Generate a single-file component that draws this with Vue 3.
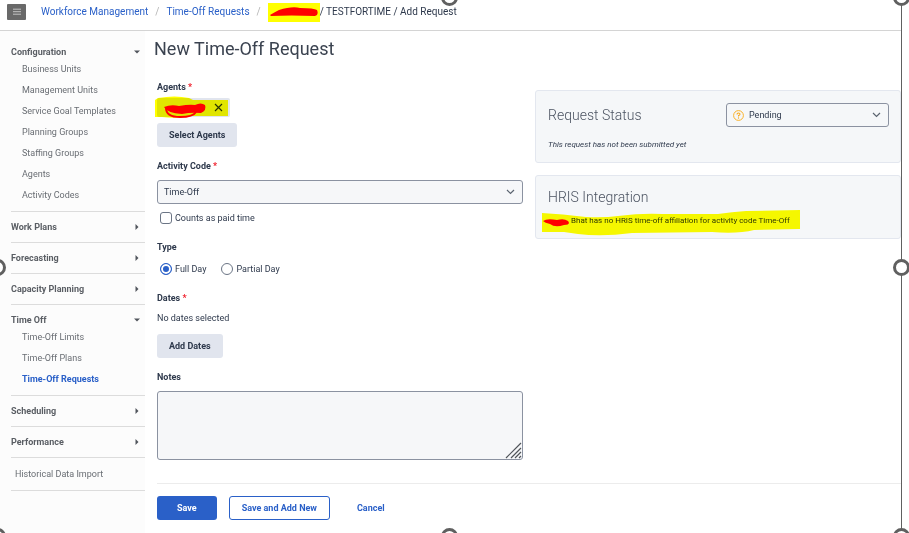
<script setup>
import { ref } from 'vue'

const menu = ref([
  {
    title: 'Configuration',
    open: true,
    items: [
      'Business Units',
      'Management Units',
      'Service Goal Templates',
      'Planning Groups',
      'Staffing Groups',
      'Agents',
      'Activity Codes',
    ],
  },
  { title: 'Work Plans', open: false, items: [] },
  { title: 'Forecasting', open: false, items: [] },
  { title: 'Capacity Planning', open: false, items: [] },
  {
    title: 'Time Off',
    open: true,
    items: ['Time-Off Limits', 'Time-Off Plans', 'Time-Off Requests'],
  },
  { title: 'Scheduling', open: false, items: [] },
  { title: 'Performance', open: false, items: [] },
])

const current = 'Time-Off Requests'
const handles = ['top', 'topRight', 'left', 'right', 'bottomLeft', 'bottom', 'bottomRight']

const activityCode = ref('Time-Off')
const paidTime = ref(false)
const dayType = ref('full')
const notes = ref('')
const status = ref('Pending')
</script>

<template>
  <div class="page">
    <header class="topBar">
      <button class="menuBtn" aria-label="Menu">
        <svg width="8" height="8" viewBox="0 0 8 8">
          <path d="M0 1.2h8M0 3.7h8M0 6.2h8" stroke="#c4c4c4" stroke-width="1" />
        </svg>
      </button>
      <nav class="crumbs">
        <a href="#">Workforce Management</a>
        <span class="slash">/</span>
        <a href="#">Time-Off Requests</a>
        <span class="slash">/</span>
        <span class="marked">
          <svg width="48" height="10" viewBox="0 0 48 10">
            <path d="M0 8Q5 5 9 3Q22-1 30 1Q44 1 47 3Q49 8 45 9Q20 8 1 9Z" fill="#f00" />
          </svg>
        </span>
        <span>/ TESTFORTIME / Add Request</span>
      </nav>
    </header>

    <div class="body">
      <aside class="sidebar">
        <section v-for="group in menu" :key="group.title" class="group" :class="{ open: group.open }">
          <button class="groupTitle" :aria-expanded="group.open" @click="group.open = !group.open">
            {{ group.title }}
            <svg width="6" height="6" viewBox="0 0 6 6">
              <path :d="group.open ? 'M0 1.5h6L3 4.5z' : 'M1.5 0v6L4.5 3z'" fill="#50555c" />
            </svg>
          </button>
          <ul v-if="group.open && group.items.length">
            <li v-for="item in group.items" :key="item">
              <a href="#" :class="{ current: item === current }">{{ item }}</a>
            </li>
          </ul>
        </section>
        <a href="#" class="importLink">Historical Data Import</a>
      </aside>

      <main class="main">
        <h1>New Time-Off Request</h1>
        <form class="form" @submit.prevent>
          <div class="columns">
            <div class="fields">
              <h2>Agents <span class="required">*</span></h2>
              <div class="chip">
                <button type="button" class="removeBtn" aria-label="Remove agent">
                  <svg width="9" height="9" viewBox="0 0 9 9">
                    <path d="M1 1l7 7M8 1L1 8" stroke="#2a3442" stroke-width="1.2" />
                  </svg>
                </button>
                <svg class="chipMark" width="74" height="22" viewBox="0 0 74 22">
                  <path d="M0 4L3 2Q20-1 34 2L38 4H73V20H36Q20 23 7 21H0Z" fill="#ff0" />
                </svg>
                <svg class="chipScribble" width="44" height="17" viewBox="0 0 44 17">
                  <path
                    d="M1 5Q8 2 16 4Q27 2 32 3Q38 0 42 3Q44 8 38 11Q28 10 19 12Q4 11 1 5Z"
                    fill="#f00"
                  />
                  <path d="M3 6Q3 15 17 15Q30 15 33 10" fill="none" stroke="#f00" stroke-width="2" />
                </svg>
              </div>
              <button type="button" class="btn gray">Select Agents</button>

              <label class="heading" for="activity">Activity Code <span class="required">*</span></label>
              <div class="selectBox">
                <select id="activity" v-model="activityCode">
                  <option>Time-Off</option>
                </select>
                <svg class="chevron" width="9" height="6" viewBox="0 0 9 6">
                  <path d="M1 1l3.5 3.5L8 1" fill="none" stroke="#5b6470" stroke-width="1.2" />
                </svg>
              </div>
              <label class="choice paid">
                <input v-model="paidTime" type="checkbox" />
                Counts as paid time
              </label>

              <h2 id="typeLabel">Type</h2>
              <div class="choices" role="radiogroup" aria-labelledby="typeLabel">
                <label class="choice">
                  <input v-model="dayType" type="radio" name="dayType" value="full" />
                  Full Day
                </label>
                <label class="choice">
                  <input v-model="dayType" type="radio" name="dayType" value="partial" />
                  Partial Day
                </label>
              </div>

              <h2>Dates <span class="required">*</span></h2>
              <p class="noDates">No dates selected</p>
              <button type="button" class="btn gray">Add Dates</button>

              <label class="heading" for="notes">Notes</label>
              <div class="notesBox">
                <textarea id="notes" v-model="notes"></textarea>
                <svg class="grip" width="17" height="17" viewBox="0 0 17 17">
                  <path
                    d="M1 16L16 1M6 16L16 6M10 16L16 10M14 16L16 14"
                    stroke="#50545a"
                    stroke-width="1.2"
                  />
                </svg>
              </div>
            </div>

            <div class="cards">
              <section class="card">
                <div class="cardTop">
                  <label class="cardTitle" for="status">Request Status</label>
                  <div class="selectBox statusBox">
                    <svg class="statusIcon" width="11" height="11" viewBox="0 0 11 11">
                      <circle cx="5.5" cy="5.5" r="4.9" fill="none" stroke="#f9b22b" />
                      <path
                        d="M4 4.4Q4 3 5.5 3T7 4.3Q7 5.2 5.5 5.6V6.5"
                        fill="none"
                        stroke="#f9a91b"
                        stroke-width="1.1"
                      />
                      <circle cx="5.5" cy="8" r=".7" fill="#f9a91b" />
                    </svg>
                    <select id="status" v-model="status">
                      <option>Pending</option>
                    </select>
                    <svg class="chevron" width="9" height="6" viewBox="0 0 9 6">
                      <path d="M1 1l3.5 3.5L8 1" fill="none" stroke="#5b6470" stroke-width="1.2" />
                    </svg>
                  </div>
                </div>
                <p class="statusNote">This request has not been submitted yet</p>
              </section>

              <section class="card">
                <h3 class="cardTitle">HRIS Integration</h3>
                <p class="hrisNote">
                  Bhat has no HRIS time-off affiliation for activity code Time-Off
                  <svg class="hrisMark" width="259" height="26" viewBox="0 0 259 26">
                    <path
                      d="M0 3Q20 4 44 7Q62 8 76 6Q100 3 120 4L176 4Q190 2 204 1L258 0V19L212 20Q196 24 170 22L90 23Q60 27 36 24L22 22H0Z"
                      fill="#ff0"
                    />
                  </svg>
                  <svg class="hrisScribble" width="27" height="9" viewBox="0 0 27 9">
                    <path d="M0 3Q4 0 14 2Q21 0 25 3Q28 7 21 7Q12 10 7 6Q2 5 0 3Z" fill="#f00" />
                  </svg>
                </p>
              </section>
            </div>
          </div>

          <footer class="actions">
            <button type="submit" class="btn primary">Save</button>
            <button type="button" class="btn outline">Save and Add New</button>
            <button type="button" class="btn plain">Cancel</button>
          </footer>
        </form>
      </main>
    </div>

    <!-- selection frame -->
    <div class="frame">
      <span v-for="h in handles" :key="h" class="handle" :class="h"></span>
    </div>
  </div>
</template>

<style>
body {
  background: #fff;
}
</style>

<style scoped>
.page {
  position: relative;
  box-sizing: border-box;
  min-height: 100vh;
  padding-right: 8px;
  overflow: hidden;
  display: flex;
  flex-direction: column;
  font-family: Roboto, 'Liberation Sans', sans-serif;
  font-size: 9px;
  line-height: 12px;
  color: #2e394c;
}

h1,
h2,
h3,
p,
ul {
  margin: 0;
  padding: 0;
}

button,
select,
textarea {
  font: inherit;
  color: inherit;
}

a {
  color: inherit;
  text-decoration: none;
}

svg {
  display: block;
}

.topBar {
  display: flex;
  align-items: center;
  gap: 15px;
  padding: 0 7px 6px;
  height: 24px;
  border-bottom: 1px solid #d4d4d4;
}

.menuBtn {
  display: flex;
  align-items: center;
  justify-content: center;
  width: 19px;
  height: 16px;
  padding: 0;
  border: none;
  border-radius: 1px;
  background: #696969;
}

.crumbs {
  display: flex;
  align-items: center;
  font-size: 10px;
  line-height: 18px;
}

.crumbs a {
  color: #2a60c8;
}

.slash {
  color: #b5b5b5;
  padding: 0 7px;
}

.marked {
  display: flex;
  align-items: center;
  height: 19px;
  padding: 0 2px;
  background: #ff0;
}

.body {
  flex: 1;
  display: flex;
}

.sidebar {
  flex: 0 0 134px;
  padding: 6px 0 0 11px;
  background: #fcfcfc;
  color: #696d73;
}

.group {
  padding: 8px 0;
  border-bottom: 1px solid #dcdcdc;
}

.group.open {
  padding-bottom: 5px;
}

.groupTitle {
  display: flex;
  align-items: center;
  justify-content: space-between;
  width: 100%;
  padding: 0 5px 0 0;
  border: none;
  background: none;
  font-weight: bold;
  line-height: 14px;
  color: #5a5e64;
}

.sidebar ul {
  list-style: none;
  padding-left: 11px;
}

.sidebar li {
  line-height: 21px;
}

.current {
  font-weight: bold;
  color: #2a60c8;
}

.importLink {
  display: block;
  padding: 10px 4px;
  border-bottom: 1px solid #dcdcdc;
}

.main {
  flex: 1;
  min-width: 0;
  padding: 6px 0 12px 9px;
}

h1 {
  font-size: 18px;
  line-height: 24px;
  font-weight: normal;
  color: #3b4350;
}

.form {
  padding: 20px 0 0 3px;
}

.columns {
  display: grid;
  grid-template-columns: 1fr 1fr;
  gap: 12px;
}

.fields h2,
.heading {
  display: block;
  margin: 17px 0 8px;
  font-size: 9px;
  line-height: 12px;
  font-weight: bold;
}

.fields h2:first-child {
  margin: 0 0 5px;
}

.fields .heading {
  margin-top: 13px;
}

.required {
  color: #f0202c;
}

.chip {
  position: relative;
  display: flex;
  align-items: center;
  justify-content: flex-end;
  box-sizing: border-box;
  width: 73px;
  height: 19px;
  margin-bottom: 6px;
  padding-right: 7px;
  border-radius: 2px;
  background: #e1e5ee;
}

.removeBtn {
  padding: 0;
  border: none;
  background: none;
}

.chipMark,
.hrisMark {
  position: absolute;
  left: -2px;
  top: -2px;
  mix-blend-mode: multiply;
  pointer-events: none;
}

.chipScribble {
  position: absolute;
  left: 6px;
  top: 4px;
}

.btn {
  box-sizing: border-box;
  height: 24px;
  padding: 0 12px;
  border: 1px solid transparent;
  border-radius: 3px;
  font-weight: bold;
  white-space: nowrap;
}

.gray {
  background: #e1e5ee;
  border: none;
}

.primary {
  padding: 0 19px;
  background: #2a60c8;
  color: #fff;
}

.outline {
  background: #fff;
  border-color: #2a60c8;
  color: #2a60c8;
}

.plain {
  background: none;
  color: #2a60c8;
  padding: 0 14px;
}

.selectBox {
  position: relative;
}

select {
  display: block;
  box-sizing: border-box;
  width: 100%;
  height: 24px;
  padding: 0 20px 0 6px;
  appearance: none;
  border: 1px solid #8b92a1;
  border-radius: 3px;
  background: #f6f7f9;
}

.chevron {
  position: absolute;
  right: 8px;
  top: 9px;
  pointer-events: none;
}

.choices {
  display: flex;
  gap: 15px;
  padding-top: 2px;
}

.choice {
  display: flex;
  align-items: center;
  gap: 3px;
  padding-left: 3px;
}

.choices .choice + .choice {
  padding-left: 0;
}

.paid {
  margin-top: 8px;
}

.choice input {
  box-sizing: border-box;
  width: 12px;
  height: 12px;
  margin: 0;
  appearance: none;
  border: 1px solid #6b7585;
  border-radius: 3px;
  background: #fff;
}

.choice input[type='radio'] {
  border-radius: 50%;
}

.choice input:checked {
  border-color: #2a60c8;
  background: #2a60c8;
  box-shadow: inset 0 0 0 2px #fff;
}

.noDates {
  margin-bottom: 10px;
}

.notesBox {
  position: relative;
}

textarea {
  display: block;
  box-sizing: border-box;
  width: 100%;
  height: 69px;
  resize: none;
  border: 1px solid #8b92a1;
  border-radius: 3px;
  background: #f6f7f9;
}

.grip {
  position: absolute;
  right: 1px;
  bottom: 1px;
  pointer-events: none;
}

.cards {
  display: flex;
  flex-direction: column;
  gap: 12px;
  padding-top: 9px;
}

.card {
  padding: 12px 11px 11px 12px;
  border: 1px solid #e3e7ef;
  border-radius: 3px;
  background: #f5f7f9;
}

.cardTop {
  display: flex;
  align-items: center;
  justify-content: space-between;
}

.cardTitle {
  font-size: 14px;
  line-height: 18px;
  font-weight: 300;
  color: #4b5361;
}

.statusBox {
  width: 163px;
}

.statusBox select {
  padding-left: 22px;
  background: none;
}

.statusIcon {
  position: absolute;
  left: 7px;
  top: 7px;
}

.statusNote {
  margin-top: 12px;
  font-size: 8px;
  font-style: italic;
}

.hrisNote {
  position: relative;
  margin-top: 9px;
  padding-left: 23px;
  font-size: 8px;
}

.hrisMark {
  left: -6px;
  top: -5px;
}

.hrisScribble {
  position: absolute;
  left: -5px;
  top: 3px;
}

.actions {
  display: flex;
  gap: 12px;
  margin-top: 23px;
  padding-top: 12px;
  border-top: 1px solid #ececec;
}

/* Selection frame */
.frame {
  position: absolute;
  inset: 0 7px 0 0;
  border-right: 1px solid #606060;
  pointer-events: none;
}

.handle {
  position: absolute;
  box-sizing: border-box;
  width: 17px;
  height: 17px;
  margin: -8px;
  border: 3px solid #606060;
  border-radius: 50%;
  background: #fff;
}

.top,
.topRight {
  top: -3px;
}

.left,
.right {
  top: 50%;
}

.bottom,
.bottomLeft,
.bottomRight {
  top: 100%;
  margin-top: -5px;
}

.left,
.bottomLeft {
  left: -3px;
}

.top,
.bottom {
  left: 50%;
  margin-left: -10px;
}

.topRight,
.right,
.bottomRight {
  left: 100%;
}
</style>
